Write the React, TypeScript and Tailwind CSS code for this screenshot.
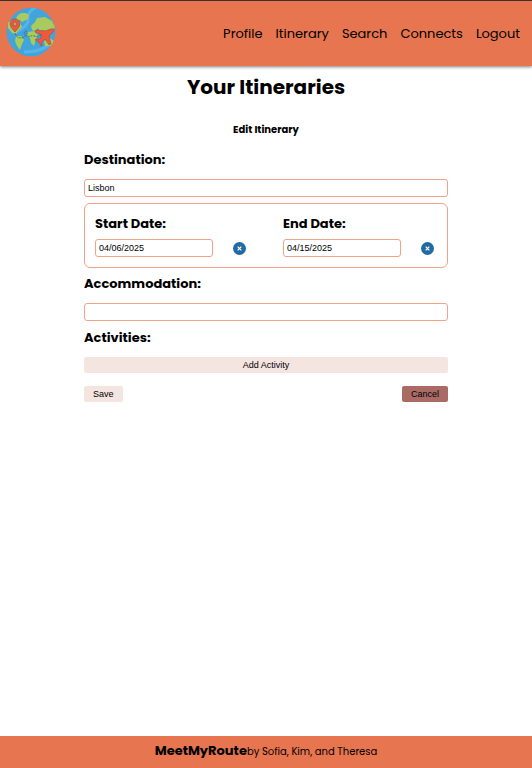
import { useState } from "react";

const links = ["Profile", "Itinerary", "Search", "Connects", "Logout"];

const fieldStyle =
  "h-[18px] w-full rounded-[3px] border border-[#efa38b] bg-white px-[3px] font-['Liberation_Sans',Arial,sans-serif] text-[9px] leading-3 text-black outline-none";
const buttonStyle =
  "h-4 rounded-xs font-['Liberation_Sans',Arial,sans-serif] text-[9px] leading-3 text-black";
const labelStyle = "block text-[13px] leading-5 font-bold";

function Globe() {
  return (
    <svg viewBox="0 0 50 50" className="mb-1 size-[50px]" role="img" aria-label="MeetMyRoute">
      <defs>
        <clipPath id="globe">
          <circle cx="25" cy="25" r="24.5" />
        </clipPath>
      </defs>
      <g clipPath="url(#globe)">
        <circle cx="25" cy="25" r="24.5" fill="#41a5dc" />
        <path d="M30 0Q21 5 22 12T8 26M47 34Q38 45 18 45" fill="none" stroke="#58b4e4" strokeWidth="3" />
        <g fill="#a9ca5c">
          <path d="M11 9l4-3 5 0 3 2-1 4-4 2-2 1-2-2-4 0zM2 15l5-2 7 2 2 5-3 3-3 4-4-1-4-5zM10 29l5 0 3 4-2 4-2 6-3-4-2-5z" />
          <path d="M25 19l4-4 2-4 8-1 7 4 3 6-3 3-3-1-2 5-3-4-4 1-2-3-3 3-3-1zM22 25l6-1 4 4-2 4-2 7-3-3-1-5-3-3zM38 34l6-3 4 3-3 5-6 0z" />
        </g>
      </g>
      <path
        d="M9 26c1 5 6 6 9 4s4-5 2-6-3 4 1 5 4-1 7 0 5 0 7-1"
        fill="none"
        stroke="#40606b"
        strokeWidth=".8"
        strokeDasharray="2 1"
      />
      <path d="M9 25Q4 20 4 17a5 5 0 0 1 10 0q0 3-5 8z" fill="#e95b3d" stroke="#9b513e" strokeWidth=".6" />
      <circle cx="9" cy="17" r="2" fill="#e59576" stroke="#8f4c3d" strokeWidth=".7" />
      <path
        d="M45 22c2-1 4 1 2 3l-4 4 2 8-2 1-4-6-3 3 0 4-1 0-2-4-4-2 1-1 4 0 2-4-7-3 1-2 9 1z"
        fill="#ef5838"
        stroke="#9c4836"
        strokeWidth=".5"
      />
    </svg>
  );
}

function DateField({ id, label, initial }: { id: string; label: string; initial: string }) {
  const [value, setValue] = useState(initial);
  return (
    <div>
      <label htmlFor={id} className={labelStyle}>{label}</label>
      <div className="mt-[5px] flex items-start gap-5">
        <div className="flex w-[118px]">
          <input id={id} value={value} onChange={(e) => setValue(e.target.value)} className={fieldStyle} />
        </div>
        <button
          type="button"
          aria-label={`Clear ${label}`}
          onClick={() => setValue("")}
          className="mt-[3px] flex size-[13px] items-center justify-center rounded-full bg-[#216ba5]"
        >
          <svg viewBox="0 0 5 5" className="size-[5px]" aria-hidden="true">
            <path d="M.7.7l3.6 3.6M4.3.7L.7 4.3" stroke="white" strokeWidth="1.2" />
          </svg>
        </button>
      </div>
    </div>
  );
}

export default function App() {
  return (
    <div className="flex min-h-screen flex-col bg-white font-[Poppins,Inter,sans-serif] text-black">
      <header className="flex min-h-[66px] items-center justify-between border-t border-[#3b302d] bg-[#e67550] pr-3 pl-[6px] shadow-[0_1px_3px_rgba(0,0,0,0.5)]">
        <Globe />
        <nav className="flex gap-[13px] text-[13px] leading-5">
          {links.map((link) => (
            <a key={link} href={`#${link.toLowerCase()}`}>{link}</a>
          ))}
        </nav>
      </header>

      <main className="flex flex-1 flex-col items-center px-4 pt-[6px]">
        <h1 className="text-[20px] leading-[30px] font-bold">Your Itineraries</h1>
        <h2 className="mt-5 text-[10px] leading-4 font-bold">Edit Itinerary</h2>
        <form className="mt-3 w-full max-w-[364px]" onSubmit={(e) => e.preventDefault()}>
          <label htmlFor="destination" className={labelStyle}>Destination:</label>
          <input id="destination" defaultValue="Lisbon" className={`${fieldStyle} mt-[9px] block`} />

          <div className="mt-[6px] flex justify-between rounded-md border border-[#efa38b] pt-[10px] pr-[13px] pb-[10px] pl-[10px]">
            <DateField id="start" label="Start Date:" initial="04/06/2025" />
            <DateField id="end" label="End Date:" initial="04/15/2025" />
          </div>

          <label htmlFor="accommodation" className={`${labelStyle} mt-[6px]`}>Accommodation:</label>
          <input id="accommodation" className={`${fieldStyle} mt-[9px] block`} />

          <h3 className={`${labelStyle} mt-[7px]`}>Activities:</h3>
          <button type="button" className={`${buttonStyle} mt-[9px] block w-full bg-[#f5e5e1]`}>Add Activity</button>
          <div className="mt-[13px] flex justify-between">
            <button type="submit" className={`${buttonStyle} bg-[#f5e5e1] px-[9px]`}>Save</button>
            <button type="button" className={`${buttonStyle} bg-[#aa6b67] px-[9px]`}>Cancel</button>
          </div>
        </form>
      </main>

      <footer className="flex h-8 items-center justify-center bg-[#e67550] pb-[2px]">
        <p className="text-[10px] leading-5">
          <strong className="text-[13px] font-bold">MeetMyRoute</strong>by Sofia, Kim, and Theresa
        </p>
      </footer>
    </div>
  );
}
